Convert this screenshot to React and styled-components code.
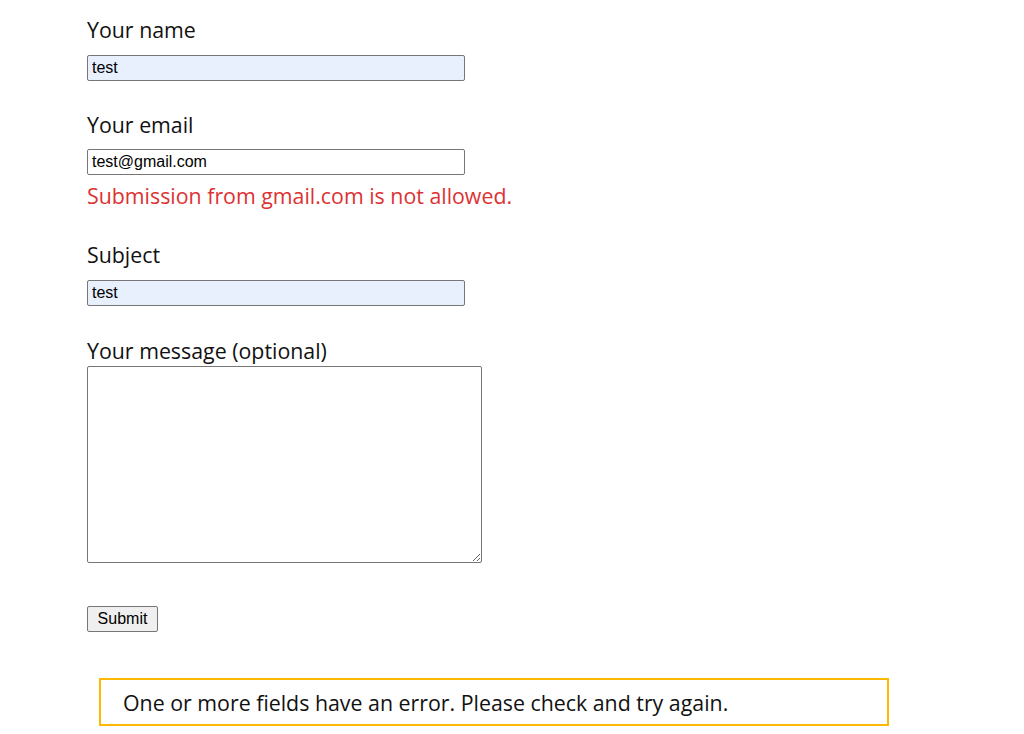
import React from 'react'
import styled, { createGlobalStyle } from 'styled-components'

const GlobalStyle = createGlobalStyle`
    html, body {
        margin: 0;
        padding: 0;
        background: #ffffff;
    }
    body {
        font-family: "Open Sans", "Noto Sans", sans-serif;
        color: #111111;
    }
`

const Page = styled.main`
    padding: 17px 0 0 87px;
`

const Form = styled.form`
    display: flex;
    flex-direction: column;
    align-items: flex-start;
`

const Field = styled.div`
    display: flex;
    flex-direction: column;
    align-items: flex-start;
    margin-bottom: ${p => p.$after || 32}px;
`

const Label = styled.label`
    font-size: 21.35px;
    line-height: 25px;
    margin-bottom: ${p => p.$gap ?? 13}px;
`

const Input = styled.input`
    box-sizing: border-box;
    width: 378px;
    height: 26px;
    margin: 0;
    padding: 1px 4px;
    border: 1px solid #767676;
    border-radius: 2px;
    font-family: "Liberation Sans", Arial, sans-serif;
    font-size: 16px;
    color: #000;
    background: ${p => (p.$filled ? '#e8f0fe' : '#ffffff')};
    outline: none;
`

const TextArea = styled.textarea`
    box-sizing: border-box;
    width: 395px;
    height: 197px;
    margin: 0;
    border: 1px solid #767676;
    border-radius: 2px;
    font-family: "Liberation Mono", monospace;
    font-size: 13px;
`

const Error = styled.span`
    margin-top: 8px;
    font-size: 21.35px;
    line-height: 25px;
    color: #dc3232;
`

const Submit = styled.button`
    box-sizing: border-box;
    width: 71px;
    height: 26px;
    padding: 0;
    border: 1px solid #767676;
    border-radius: 2px;
    background: #efefef;
    font-family: "Liberation Sans", Arial, sans-serif;
    font-size: 16px;
    color: #000;
`

const Notice = styled.div`
    box-sizing: border-box;
    width: 790px;
    height: 48px;
    margin: 46px 0 0 12px;
    padding: 0 22px;
    display: flex;
    align-items: center;
    border: 2px solid #ffb900;
    font-size: 21.35px;
    color: #111111;
`

export default function App() {
    return (
        <>
            <GlobalStyle />
            <Page>
                <Form onSubmit={e => e.preventDefault()}>
                    <Field $after={31}>
                        <Label htmlFor="name">Your name</Label>
                        <Input id="name" $filled defaultValue="test" />
                    </Field>
                    <Field $after={34}>
                        <Label htmlFor="email" $gap={12}>Your email</Label>
                        <Input id="email" defaultValue="test@gmail.com" />
                        <Error>Submission from gmail.com is not allowed.</Error>
                    </Field>
                    <Field>
                        <Label htmlFor="subject">Subject</Label>
                        <Input id="subject" $filled defaultValue="test" />
                    </Field>
                    <Field $after={43}>
                        <Label htmlFor="message" $gap={3}>Your message (optional)</Label>
                        <TextArea id="message" />
                    </Field>
                    <Submit type="submit">Submit</Submit>
                </Form>
                <Notice>One or more fields have an error. Please check and try again.</Notice>
            </Page>
        </>
    )
}
